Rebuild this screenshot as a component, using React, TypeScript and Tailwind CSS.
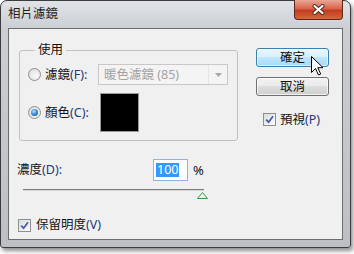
import React from "react";

const Key = ({ children }: { children: React.ReactNode }) => (
  <span className="text-[#22387a]">{children}</span>
);

const Radio = ({ checked }: { checked?: boolean }) => (
  <span className="flex h-[13px] w-[13px] shrink-0 items-center justify-center rounded-full border border-[#8e8f8f] bg-[radial-gradient(circle_at_60%_60%,#fbfbfb,#d6d6d6)]">
    {checked && (
      <span className="h-[7px] w-[7px] rounded-full bg-[radial-gradient(circle_at_40%_35%,#b6e2ff,#2a7fd4_55%,#104f9c)]" />
    )}
  </span>
);

const CheckBox = () => (
  <span className="flex h-[13px] w-[13px] shrink-0 items-center justify-center border border-[#8e8f8f] bg-[linear-gradient(135deg,#dcdcdc,#fbfbfb)]">
    <svg width="9" height="9" viewBox="0 0 9 9">
      <path d="M1.2 4.6 L3.6 7.2 L8 1.2" fill="none" stroke="#3f5ba8" strokeWidth="1.7" />
    </svg>
  </span>
);

const Cursor = () => (
  <svg width="13" height="20" viewBox="0 0 13 20" className="absolute left-[54px] top-[7px]">
    <path
      d="M0.5 0.5 L0.5 16.5 L4.5 12.5 L7.5 19 L9.7 18 L6.8 11.7 L12 11.7 Z"
      fill="#ffffff"
      stroke="#000000"
      strokeWidth="1"
      strokeLinejoin="round"
    />
  </svg>
);

export default function App() {
  return (
    <div className="h-[254px] w-[354px] bg-white font-['Noto_Sans','Noto_Sans_CJK_TC',sans-serif] text-[12.5px] leading-[14px] text-[#141414]">
      <div className="flex h-[248px] w-[351px] flex-col rounded-t-[7px] rounded-b-[3px] border border-[#3c3c3c] bg-[linear-gradient(#e0e3e7,#cbcfd4_28px,#bcc0c5)] px-[7px] pb-[7px] shadow-[2px_3px_4px_rgba(0,0,0,0.45)]">
        {/* title bar */}
        <div className="flex h-[27px] items-start justify-between">
          <span className="mt-[6px] text-[#1e1e1e]">相片濾鏡</span>
          <button className="-mt-[1px] flex h-[20px] w-[49px] items-center justify-center rounded-b-[4px] border border-t-0 border-[#5a271d] bg-[linear-gradient(#eba796,#d8654a_45%,#c23c1f_55%,#d5683a)]">
            <svg width="13" height="11" viewBox="0 0 13 11">
              <path d="M2.5 2 L10.5 9 M10.5 2 L2.5 9" stroke="#4a2a22" strokeWidth="4" strokeLinecap="round" />
              <path d="M2.5 2 L10.5 9 M10.5 2 L2.5 9" stroke="#ffffff" strokeWidth="2.2" strokeLinecap="round" />
            </svg>
          </button>
        </div>

        {/* client area */}
        <div className="flex-1 border border-[#6d6d6d] bg-[#f0f0f0]">
          <div className="mt-[14px] flex items-start">
            <fieldset className="ml-[10px] w-[219px] rounded-[3px] border border-[#c2c2c2] pb-[8px] pl-[8px] pt-[7px]">
              <legend className="ml-[7px] px-[3px] leading-[14px]">使用</legend>
              <div className="flex h-[21px] items-center">
                <Radio />
                <span className="ml-[4px] w-[53px]">
                  濾鏡<Key>(F):</Key>
                </span>
                <div className="flex h-[21px] w-[130px] items-center border border-[#c8c8c8] bg-[#f4f4f4] text-[#a3a3a3]">
                  <span className="flex-1 pl-[5px]">暖色濾鏡 (85)</span>
                  <span className="flex h-full w-[19px] items-center justify-center border-l border-[#e4e4e4]">
                    <svg width="7" height="4" viewBox="0 0 7 4">
                      <path d="M0 0 H7 L3.5 4 Z" fill="#a8a8a8" />
                    </svg>
                  </span>
                </div>
              </div>
              <div className="mt-[8px] flex h-[39px] items-center">
                <Radio checked />
                <span className="ml-[4px] w-[55px]">
                  顏色<Key>(C):</Key>
                </span>
                <div className="h-[39px] w-[39px] border border-[#9a9a9a] bg-black" />
              </div>
            </fieldset>

            <div className="ml-[18px] mt-[5px] flex flex-col">
              <button className="relative h-[19px] w-[73px] rounded-[3px] border border-[#3c7fb1] bg-[linear-gradient(#eaf6fd,#d9f0fc_45%,#bee6fd_50%,#a7d9f5)] leading-[17px] shadow-[inset_0_0_0_1px_rgba(255,255,255,0.6)]">
                確定
                <Cursor />
              </button>
              <button className="mt-[10px] h-[19px] w-[73px] rounded-[3px] border border-[#707070] bg-[linear-gradient(#f2f2f2,#ebebeb_45%,#dddddd_50%,#cfcfcf)] leading-[17px] shadow-[inset_0_0_0_1px_rgba(255,255,255,0.7)]">
                取消
              </button>
              <div className="mt-[17px] flex h-[13px] items-center pl-[7px]">
                <CheckBox />
                <span className="ml-[4px]">
                  預視<Key>(P)</Key>
                </span>
              </div>
            </div>
          </div>

          {/* density */}
          <div className="mt-[18px] flex h-[22px] items-center pl-[8px]">
            <span className="w-[136px]">
              濃度<Key>(D):</Key>
            </span>
            <div className="flex h-[22px] w-[35px] items-center border border-[#8fb5dd] bg-white pl-[2px]">
              <span className="bg-[#3399ff] px-[1px] text-white">100</span>
            </div>
            <span className="ml-[5px] text-[13px]">%</span>
          </div>

          {/* slider */}
          <div className="relative ml-[14px] mt-[8px] h-[10px] w-[181px]">
            <div className="h-[1px] bg-[#7d7d7d]" />
            <div className="h-[1px] bg-[#d6d6d6]" />
            <svg width="11" height="7" viewBox="0 0 11 7" className="absolute left-[174px] top-[3px]">
              <path d="M5.5 0.5 L10.5 6.5 H0.5 Z" fill="#eaf6ea" stroke="#3c9a43" strokeWidth="1" strokeLinejoin="round" />
            </svg>
          </div>

          {/* preserve luminosity */}
          <div className="mt-[19px] flex h-[14px] items-center pl-[9px]">
            <CheckBox />
            <span className="ml-[5px]">
              保留明度<Key>(V)</Key>
            </span>
          </div>
        </div>
      </div>
    </div>
  );
}
